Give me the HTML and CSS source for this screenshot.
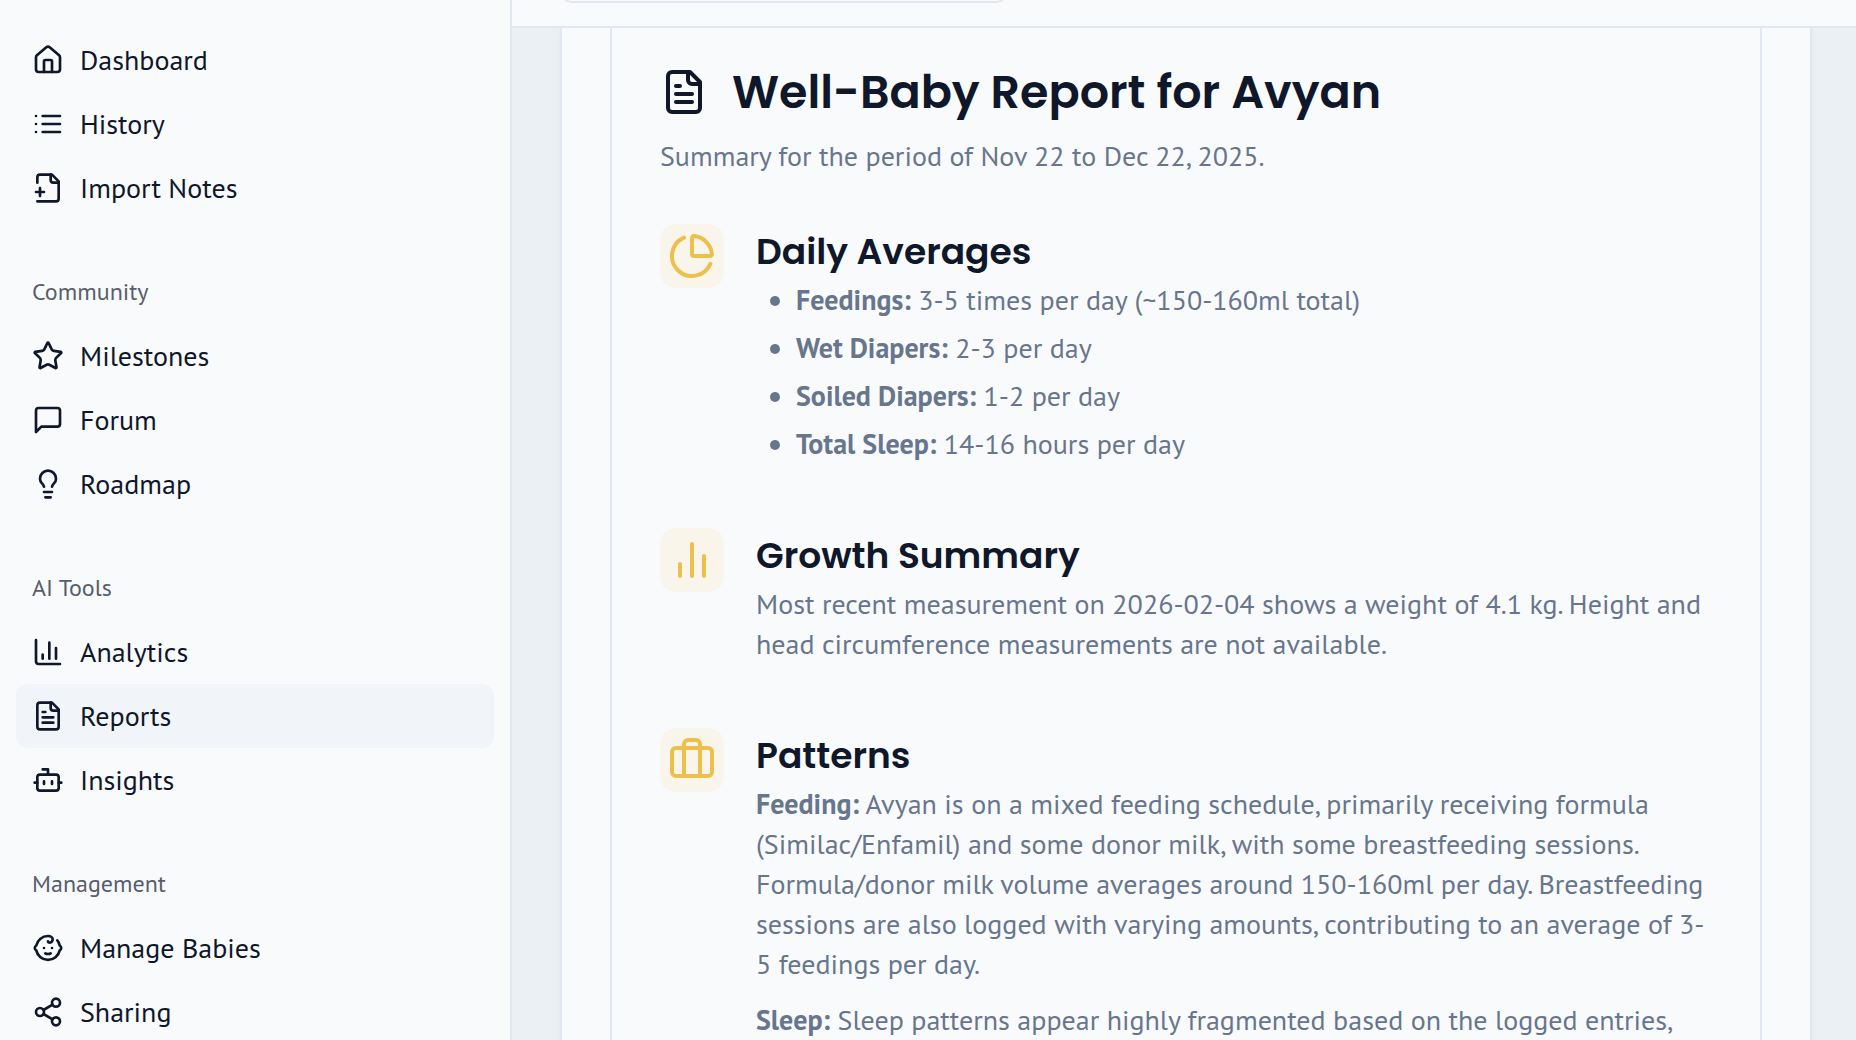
FILE: index.html
```html
<!DOCTYPE html>
<html lang="en">
<head>
    <meta charset="UTF-8">
    <meta name="viewport" content="width=device-width, initial-scale=1.0">
    <link rel="stylesheet" href="styles.css">
    <title>Well-Baby Report</title>
</head>
<body>
    <nav class="sidebar">
        <div class="nav-group">
            <a class="nav-item" href="#">
                <svg class="icon" viewBox="0 0 24 24"><path d="M15 21v-8a1 1 0 0 0-1-1h-4a1 1 0 0 0-1 1v8"/><path d="M3 10a2 2 0 0 1 .709-1.528l7-5.999a2 2 0 0 1 2.582 0l7 5.999A2 2 0 0 1 21 10v9a2 2 0 0 1-2 2H5a2 2 0 0 1-2-2z"/></svg>
                Dashboard
            </a>
            <a class="nav-item" href="#">
                <svg class="icon" viewBox="0 0 24 24"><path d="M3 12h.01M3 18h.01M3 6h.01M8 12h13M8 18h13M8 6h13"/></svg>
                History
            </a>
            <a class="nav-item" href="#">
                <svg class="icon" viewBox="0 0 24 24"><path d="M4 22h14a2 2 0 0 0 2-2V7l-5-5H6a2 2 0 0 0-2 2v4"/><path d="M14 2v4a2 2 0 0 0 2 2h4"/><path d="M3 15h6M6 12v6"/></svg>
                Import Notes
            </a>
        </div>
        <div class="nav-group">
            <div class="nav-label">Community</div>
            <a class="nav-item" href="#">
                <svg class="icon" viewBox="0 0 24 24"><path d="M11.525 2.295a.53.53 0 0 1 .95 0l2.31 4.679a2.123 2.123 0 0 0 1.595 1.16l5.166.756a.53.53 0 0 1 .294.904l-3.736 3.638a2.123 2.123 0 0 0-.611 1.878l.882 5.14a.53.53 0 0 1-.771.56l-4.618-2.428a2.122 2.122 0 0 0-1.973 0L6.396 21.01a.53.53 0 0 1-.77-.56l.881-5.139a2.122 2.122 0 0 0-.611-1.879L2.16 9.795a.53.53 0 0 1 .294-.906l5.165-.755a2.122 2.122 0 0 0 1.597-1.16z"/></svg>
                Milestones
            </a>
            <a class="nav-item" href="#">
                <svg class="icon" viewBox="0 0 24 24"><path d="M21 15a2 2 0 0 1-2 2H7l-4 4V5a2 2 0 0 1 2-2h14a2 2 0 0 1 2 2z"/></svg>
                Forum
            </a>
            <a class="nav-item" href="#">
                <svg class="icon" viewBox="0 0 24 24"><path d="M15 14c.2-1 .7-1.7 1.5-2.5 1-.9 1.5-2.2 1.5-3.5A6 6 0 0 0 6 8c0 1 .2 2.2 1.5 3.5.7.7 1.3 1.5 1.5 2.5"/><path d="M9 18h6M10 22h4"/></svg>
                Roadmap
            </a>
        </div>
        <div class="nav-group">
            <div class="nav-label">AI Tools</div>
            <a class="nav-item" href="#">
                <svg class="icon" viewBox="0 0 24 24"><path d="M3 3v16a2 2 0 0 0 2 2h16"/><path d="M18 17V9M13 17V5M8 17v-3"/></svg>
                Analytics
            </a>
            <a class="nav-item active" href="#">
                <svg class="icon" viewBox="0 0 24 24"><path d="M15 2H6a2 2 0 0 0-2 2v16a2 2 0 0 0 2 2h12a2 2 0 0 0 2-2V7Z"/><path d="M14 2v4a2 2 0 0 0 2 2h4"/><path d="M10 9H8M16 13H8M16 17H8"/></svg>
                Reports
            </a>
            <a class="nav-item" href="#">
                <svg class="icon" viewBox="0 0 24 24"><path d="M12 8V4H8"/><rect width="16" height="12" x="4" y="8" rx="2"/><path d="M2 14h2M20 14h2M15 13v2M9 13v2"/></svg>
                Insights
            </a>
        </div>
        <div class="nav-group">
            <div class="nav-label">Management</div>
            <a class="nav-item" href="#">
                <svg class="icon" viewBox="0 0 24 24"><path d="M9 12h.01M15 12h.01M10 16c.5.3 1.2.5 2 .5s1.5-.2 2-.5"/><path d="M19 6.3a9 9 0 0 1 1.8 3.9 2 2 0 0 1 0 3.6 9 9 0 0 1-17.6 0 2 2 0 0 1 0-3.6A9 9 0 0 1 12 3c2 0 3.5 1.1 3.5 2.5s-.9 2.5-2 2.5c-.8 0-1.5-.4-1.5-1"/></svg>
                Manage Babies
            </a>
            <a class="nav-item" href="#">
                <svg class="icon" viewBox="0 0 24 24"><circle cx="18" cy="5" r="3"/><circle cx="6" cy="12" r="3"/><circle cx="18" cy="19" r="3"/><path d="M8.59 13.51l6.83 3.98M15.41 6.51l-6.82 3.98"/></svg>
                Sharing
            </a>
        </div>
    </nav>

    <div class="page">
        <header class="topbar">
            <button class="picker" aria-label="Select baby"></button>
        </header>
        <main class="content">
            <div class="panel">
                <article class="report">
                    <h1 class="report-title">
                        <svg class="icon icon-lg" viewBox="0 0 24 24"><path d="M15 2H6a2 2 0 0 0-2 2v16a2 2 0 0 0 2 2h12a2 2 0 0 0 2-2V7Z"/><path d="M14 2v4a2 2 0 0 0 2 2h4"/><path d="M10 9H8M16 13H8M16 17H8"/></svg>
                        Well-Baby Report for Avyan
                    </h1>
                    <p class="report-period">Summary for the period of Nov 22 to Dec 22, 2025.</p>

                    <section class="section">
                        <div class="tile">
                            <svg class="icon icon-lg" viewBox="0 0 24 24"><path d="M21 12c.552 0 1.005-.449.95-.998a10 10 0 0 0-8.953-8.951c-.55-.055-.998.398-.998.95v8a1 1 0 0 0 1 1z"/><path d="M21.21 15.89A10 10 0 1 1 8 2.83"/></svg>
                        </div>
                        <div class="section-body">
                            <h2>Daily Averages</h2>
                            <ul>
                                <li><strong>Feedings:</strong> 3-5 times per day (~150-160ml total)</li>
                                <li><strong>Wet Diapers:</strong> 2-3 per day</li>
                                <li><strong>Soiled Diapers:</strong> 1-2 per day</li>
                                <li><strong>Total Sleep:</strong> 14-16 hours per day</li>
                            </ul>
                        </div>
                    </section>

                    <section class="section">
                        <div class="tile">
                            <svg class="icon icon-lg" viewBox="0 0 24 24"><path d="M18 20V10M12 20V4M6 20v-6"/></svg>
                        </div>
                        <div class="section-body">
                            <h2>Growth Summary</h2>
                            <p>Most recent measurement on 2026-02-04 shows a weight of 4.1 kg. Height and head circumference measurements are not available.</p>
                        </div>
                    </section>

                    <section class="section">
                        <div class="tile">
                            <svg class="icon icon-lg" viewBox="0 0 24 24"><path d="M16 20V4a2 2 0 0 0-2-2h-4a2 2 0 0 0-2 2v16"/><rect width="20" height="14" x="2" y="6" rx="2"/></svg>
                        </div>
                        <div class="section-body">
                            <h2>Patterns</h2>
                            <p><strong>Feeding:</strong> Avyan is on a mixed feeding schedule, primarily receiving formula (Similac/Enfamil) and some donor milk, with some breastfeeding sessions. Formula/donor milk volume averages around 150-160ml per day. Breastfeeding sessions are also logged with varying amounts, contributing to an average of 3-<wbr>5 feedings per day.</p>
                            <p><strong>Sleep:</strong> Sleep patterns appear highly fragmented based on the logged entries,</p>
                        </div>
                    </section>
                </article>
            </div>
        </main>
    </div>
</body>
</html>
```
FILE: styles.css
```css
* {
    box-sizing: border-box;
}

body {
    margin: 0;
    display: flex;
    height: 100vh;
    overflow: hidden;
    font-family: "PT Sans", Lato, sans-serif;
    font-size: 28px;
    line-height: 40px;
    color: #0f172a;
    background-color: #ebf0f5;
}

h1, h2, p, ul {
    margin: 0;
}

.icon {
    width: 32px;
    height: 32px;
    flex-shrink: 0;
    fill: none;
    stroke: currentColor;
    stroke-width: 2;
    stroke-linecap: round;
    stroke-linejoin: round;
}

.icon-lg {
    width: 48px;
    height: 48px;
}

/* sidebar */
.sidebar {
    width: 512px;
    flex-shrink: 0;
    display: flex;
    flex-direction: column;
    gap: 40px;
    padding: 28px 16px 0;
    overflow: hidden;
    background-color: #f9fafc;
    border-right: 2px solid #e2e8f0;
}

.nav-label {
    height: 64px;
    padding: 0 16px;
    font-size: 24px;
    line-height: 64px;
    color: #575e6d;
}

.nav-item {
    display: flex;
    align-items: center;
    gap: 16px;
    height: 64px;
    padding: 0 16px;
    border-radius: 12px;
    color: inherit;
    text-decoration: none;
}

.nav-item.active {
    background-color: #f1f5f9;
}

/* page */
.page {
    flex: 1;
    min-width: 0;
    display: flex;
    flex-direction: column;
}

.topbar {
    display: flex;
    align-items: flex-end;
    flex-shrink: 0;
    height: 28px;
    padding: 0 48px 23px;
    background-color: #f9fafc;
    border-bottom: 2px solid #e2e8f0;
}

.picker {
    width: 448px;
    height: 80px;
    flex-shrink: 0;
    background-color: #f9fafc;
    border: 2px solid #e2e8f0;
    border-radius: 12px;
}

.content {
    flex: 1;
    min-height: 0;
    padding: 0 44px 0 48px;
    overflow: hidden;
}

.panel {
    min-height: 100%;
    padding: 0 48px;
    background-color: #f9fafc;
    border: solid #e2e8f0;
    border-width: 0 2px;
    box-shadow: 0 2px 6px rgba(15, 23, 42, 0.04);
}

.report {
    padding: 40px 48px 48px;
    border: solid #e2e8f0;
    border-width: 0 2px;
}

.report-title {
    display: flex;
    align-items: center;
    gap: 24px;
    font-family: Poppins, Inter, sans-serif;
    font-size: 46px;
    font-weight: 600;
    line-height: 48px;
}

.report-period {
    margin-top: 20px;
    color: #67768d;
}

.section {
    display: flex;
    gap: 32px;
    margin-top: 64px;
}

.report-period + .section {
    margin-top: 48px;
}

.tile {
    display: flex;
    align-items: center;
    justify-content: center;
    flex-shrink: 0;
    width: 64px;
    height: 64px;
    border-radius: 16px;
    background-color: #f9f5ea;
    color: #ecc04a;
}

.section-body {
    flex: 1;
    min-width: 0;
    color: #67768d;
}

.section-body h2 {
    font-family: Poppins, Inter, sans-serif;
    font-size: 36px;
    font-weight: 600;
    line-height: 56px;
    color: #0f172a;
}

.section-body ul {
    display: flex;
    flex-direction: column;
    gap: 8px;
    padding-left: 40px;
}

.section-body p + p {
    margin-top: 16px;
}
```
